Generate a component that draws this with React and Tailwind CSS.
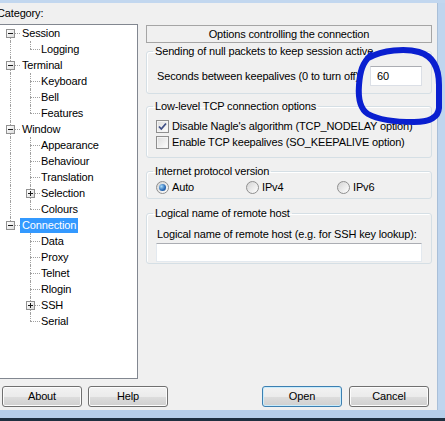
const tree = [
  { label: 'Session', children: ['Logging'] },
  { label: 'Terminal', children: ['Keyboard', 'Bell', 'Features'] },
  { label: 'Window', children: ['Appearance', 'Behaviour', 'Translation', { label: 'Selection', plus: true }, 'Colours'] },
  { label: 'Connection', selected: true, children: ['Data', 'Proxy', 'Telnet', 'Rlogin', { label: 'SSH', plus: true }, 'Serial'] },
]

// flatten the tree into rows with the info needed to draw the connector lines
const rows = []
tree.forEach((root, ri) => {
  const firstRoot = ri === 0
  const lastRoot = ri === tree.length - 1
  rows.push({ level: 0, label: root.label, selected: root.selected, firstRoot, lastRoot })
  root.children.forEach((c, ci) => {
    const item = typeof c === 'string' ? { label: c } : c
    rows.push({ level: 1, label: item.label, plus: item.plus, lastChild: ci === root.children.length - 1, parentLast: lastRoot })
  })
})

const vline = 'absolute left-[10px] w-0 border-l border-dotted border-[#a0a0a0]'
const hline = 'absolute top-[8px] h-0 border-t border-dotted border-[#a0a0a0]'

function Expander({ plus }) {
  return (
    <span className="absolute top-[4px] left-[6px] w-[9px] h-[9px] border border-[#919191] bg-[linear-gradient(135deg,#ffffff,#dcdcdc)]">
      <span className="absolute left-[1px] top-[3px] w-[5px] h-[1px] bg-[#1a1a1a]" />
      {plus && <span className="absolute left-[3px] top-[1px] w-[1px] h-[5px] bg-[#1a1a1a]" />}
    </span>
  )
}

function TreeRow({ row }) {
  return (
    <div className="flex items-center h-[16px]">
      <div className="relative w-[20px] h-full shrink-0">
        {row.level === 0 ? (
          <>
            {!row.firstRoot && <span className={`${vline} top-0 h-[8px]`} />}
            {!row.lastRoot && <span className={`${vline} top-[8px] h-[8px]`} />}
            <span className={`${hline} left-[15px] w-[5px]`} />
            <Expander />
          </>
        ) : (
          !row.parentLast && <span className={`${vline} top-0 h-[16px]`} />
        )}
      </div>
      {row.level === 1 && (
        <div className="relative w-[20px] h-full shrink-0">
          <span className={`${vline} top-0 h-[8px]`} />
          {!row.lastChild && <span className={`${vline} top-[8px] h-[8px]`} />}
          {row.plus ? (
            <>
              <span className={`${hline} left-[15px] w-[5px]`} />
              <Expander plus />
            </>
          ) : (
            <span className={`${hline} left-[10px] w-[10px]`} />
          )}
        </div>
      )}
      <span className={`px-[2px] leading-[15px] h-[15px] ${row.selected ? 'bg-[#3399ff] text-white' : ''} ${row.level === 1 ? 'ml-[-1px]' : ''}`}>
        {row.label}
      </span>
    </div>
  )
}

function Group({ title, className, children }) {
  return (
    <fieldset className={`border border-[#d5dfe5] rounded-[3px] px-[6px] shadow-[inset_1px_1px_0_#ffffff] ${className}`}>
      <legend className="px-[2px] leading-[14px]">{title}</legend>
      {children}
    </fieldset>
  )
}

function Checkbox({ checked }) {
  return (
    <span className="w-[13px] h-[13px] border border-[#8f8f8f] bg-[linear-gradient(135deg,#dcdcdc,#ffffff)] shadow-[inset_0_0_0_1px_#f4f4f4] flex items-center justify-center shrink-0">
      {checked && (
        <svg width="11" height="11" viewBox="0 0 11 11">
          <path d="M2 5.5 L4.3 8 L9 2.5" fill="none" stroke="#3f4f86" strokeWidth="1.8" />
        </svg>
      )}
    </span>
  )
}

function Radio({ checked }) {
  return (
    <span className="w-[13px] h-[13px] rounded-full border border-[#8f8f8f] bg-[linear-gradient(135deg,#d4d4d4,#ffffff)] flex items-center justify-center shrink-0">
      {checked && <span className="w-[7px] h-[7px] rounded-full bg-[radial-gradient(circle_at_35%_35%,#a9dcfa,#2767b4_60%,#1b4a8a)]" />}
    </span>
  )
}

function Button({ children, primary, className = '' }) {
  return (
    <button
      className={`h-[21px] w-[80px] rounded-[3px] border text-[11px] text-black bg-[linear-gradient(to_bottom,#f2f2f2_0%,#ebebeb_50%,#dddddd_50%,#cfcfcf_100%)] ${primary ? 'border-[#3c7fb1] shadow-[inset_0_0_0_1px_#c9ecfc]' : 'border-[#707070] shadow-[inset_0_0_0_1px_#fcfcfc]'} ${className}`}
    >
      {children}
    </button>
  )
}

export default function App() {
  return (
    <div className="relative w-[445px] h-[421px] overflow-hidden flex flex-col bg-[#f0f0f0] text-[11px] tracking-[-0.15px] text-black font-['Liberation_Sans',Arial,sans-serif]">
      <div className="h-[3px] bg-[#c2d7ef] shrink-0" />
      <div className="flex flex-1 min-h-0">
        <div className="w-[437px] flex flex-col">
          <div className="flex h-[376px]">
            <div className="ml-[-3px] w-[141px] flex flex-col shrink-0">
              <div className="h-[21px] flex items-center">Category:</div>
              <div className="ml-[2px] h-[355px] bg-white border border-[#828790] pt-0">
                {rows.map((r, i) => (
                  <TreeRow key={i} row={r} />
                ))}
              </div>
            </div>
            <div className="ml-[8px] mt-[22px] w-[286px] flex flex-col">
              <div className="h-[18px] border border-[#a5a5a5] flex items-center justify-center">
                Options controlling the connection
              </div>
              <Group title="Sending of null packets to keep session active" className="mt-[1px] h-[50px]">
                <div className="mt-[8px] h-[20px] flex items-center">
                  <span className="ml-[4px]">Seconds between keepalives (0 to turn off)</span>
                  <div className="ml-auto mr-[3px] w-[52px] h-[20px] bg-white border border-[#dbdfe6] border-t-[#abadb3] flex items-center pl-[6px]">
                    60
                  </div>
                </div>
              </Group>
              <Group title="Low-level TCP connection options" className="mt-[5px] h-[59px]">
                <div className="mt-[5px] h-[16px] flex items-center pl-[3px] gap-[3px]">
                  <Checkbox checked />
                  <span>Disable Nagle's algorithm (TCP_NODELAY option)</span>
                </div>
                <div className="h-[16px] flex items-center pl-[3px] gap-[3px]">
                  <Checkbox />
                  <span>Enable TCP keepalives (SO_KEEPALIVE option)</span>
                </div>
              </Group>
              <Group title="Internet protocol version" className="mt-[6px] h-[35px]">
                <div className="mt-[1px] h-[16px] flex items-center pl-[3px]">
                  <div className="w-[90px] flex items-center gap-[3px]">
                    <Radio checked />
                    <span>Auto</span>
                  </div>
                  <div className="w-[91px] flex items-center gap-[3px]">
                    <Radio />
                    <span>IPv4</span>
                  </div>
                  <div className="flex items-center gap-[3px]">
                    <Radio />
                    <span>IPv6</span>
                  </div>
                </div>
              </Group>
              <Group title="Logical name of remote host" className="mt-[7px] h-[58px]">
                <div className="mt-[7px] h-[14px] flex items-center ml-[4px]">
                  Logical name of remote host (e.g. for SSH key lookup):
                </div>
                <div className="mt-[2px] ml-[3px] w-[266px] h-[19px] bg-white border border-[#e3e9ef] border-t-[#abadb3]" />
              </Group>
            </div>
          </div>
          <div className="mt-[7px] flex">
            <Button className="ml-[2px]">About</Button>
            <Button className="ml-[6px]">Help</Button>
            <Button primary className="ml-[94px]">Open</Button>
            <Button className="ml-[7px]">Cancel</Button>
          </div>
        </div>
        <div className="flex-1 bg-[#bfd5ee] border-l border-[#a9bfd8]" />
      </div>
      <div className="h-[8px] bg-[#b7cfea] shrink-0" />
      <div className="h-[3px] bg-[#1f3040] shrink-0" />

      <svg className="absolute top-0 left-0 pointer-events-none" width="445" height="421" viewBox="0 0 445 421">
        <path
          d="M368 58 C383 50 405 48 419 52 C433 56 439 68 439 85 L439 108 C438 119 428 122 414 122 C394 122 377 119 368 114 C360 109 358 98 359 85 C360 72 362 63 371 55"
          fill="none"
          stroke="#0a1fd0"
          strokeWidth="6"
          strokeLinecap="round"
          strokeLinejoin="round"
        />
      </svg>
    </div>
  )
}
